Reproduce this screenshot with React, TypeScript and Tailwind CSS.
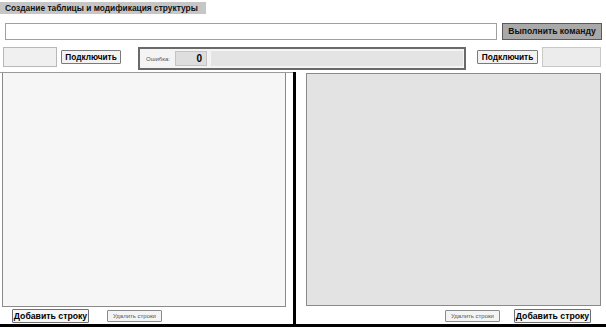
import React from "react";

const font = { fontFamily: '"Liberation Sans", Arial, sans-serif' };

function SmallButton({ label, className = "" }: { label: string; className?: string }) {
  return (
    <button
      className={`flex items-center justify-center whitespace-nowrap border border-[#8a8a8a] bg-[#f4f4f4] text-[#555] text-[6px] leading-none rounded-[1px] ${className}`}
    >
      {label}
    </button>
  );
}

function AddButton({ label, className = "" }: { label: string; className?: string }) {
  return (
    <button
      className={`flex items-center justify-center whitespace-nowrap border border-[#6f6f6f] bg-[#f6f6f6] text-black text-[8.7px] font-bold leading-none rounded-[1px] ${className}`}
    >
      {label}
    </button>
  );
}

function ConnectButton({ className = "" }: { className?: string }) {
  return (
    <button
      className={`flex items-center justify-center whitespace-nowrap border border-[#7a7a7a] bg-[#f2f2f2] text-black text-[8.3px] font-bold leading-none rounded-[1px] ${className}`}
    >
      Подключить
    </button>
  );
}

export default function App() {
  return (
    <div className="w-[606px] h-[330px] bg-white flex flex-col overflow-hidden" style={font}>
      {/* header */}
      <div className="pt-[2px] flex">
        <div className="h-[12px] bg-[#c6c6c6] pl-[5px] pr-[8px] flex items-center whitespace-nowrap text-[8.4px] font-bold text-[#111] leading-none">
          Создание таблицы и модификация структуры
        </div>
      </div>

      {/* command row */}
      <div className="mt-[9px] flex items-center pl-[5px] pr-[4px] gap-[5px]">
        <input className="flex-1 h-[17px] border border-[#a0a0a0] bg-white outline-none" />
        <button className="w-[100px] h-[17px] border border-[#5a5a5a] bg-[#a9a9a9] whitespace-nowrap text-[8.6px] font-bold text-[#111] leading-none flex items-center justify-center">
          Выполнить команду
        </button>
      </div>

      {/* connection row */}
      <div className="mt-[7px] flex items-start h-[25px]">
        <div className="ml-[3px] w-[54px] h-[20px] border border-[#b8b8b8] bg-[#f0f0f0]" />
        <ConnectButton className="ml-[4px] mt-[3px] w-[60px] h-[14px]" />
        <div className="ml-[17px] w-[328px] h-[23px] border-2 border-[#6a6a6a] bg-[#f4f4f4] flex items-center pl-[6px] pr-[1px] gap-[4px]">
          <span className="text-[6px] text-[#555] leading-none w-[25px] whitespace-nowrap">Ошибка:</span>
          <div className="w-[32px] h-[15px] border border-[#c4c4c4] bg-[#dedede] flex items-center justify-end pr-[4px] text-[10px] font-bold text-black leading-none">
            0
          </div>
          <div className="flex-1 h-[15px] bg-[#e4e4e4]" />
        </div>
        <ConnectButton className="ml-[11px] mt-[3px] w-[61px] h-[14px]" />
        <div className="ml-[4px] w-[59px] h-[20px] border border-[#c8c8c8] bg-[#ececec]" />
      </div>

      {/* panels */}
      <div className="flex flex-1 min-h-0">
        <div className="w-[293px] flex flex-col border-t border-[#9a9a9a]">
          <div className="ml-[2px] w-[284px] h-[234px] border border-[#8a8a8a] border-t-0 bg-[#f6f6f6]" />
          <div className="flex items-center mt-[2px]">
            <AddButton label="Добавить строку" className="ml-[12px] w-[77px] h-[14px]" />
            <SmallButton label="Удалить строки" className="ml-[18px] w-[55px] h-[12px]" />
          </div>
        </div>
        <div className="w-[3px] bg-black" />
        <div className="flex-1 flex flex-col">
          <div className="ml-[10px] mt-[1px] w-[295px] h-[233px] border border-[#8a8a8a] bg-[#e3e3e3]" />
          <div className="flex items-center mt-[3px]">
            <SmallButton label="Удалить строки" className="ml-[149px] w-[55px] h-[12px]" />
            <AddButton label="Добавить строку" className="ml-[14px] w-[77px] h-[14px]" />
          </div>
        </div>
      </div>

      <div className="h-[3px] bg-black" />
      <div className="h-[3px] bg-white" />
    </div>
  );
}
